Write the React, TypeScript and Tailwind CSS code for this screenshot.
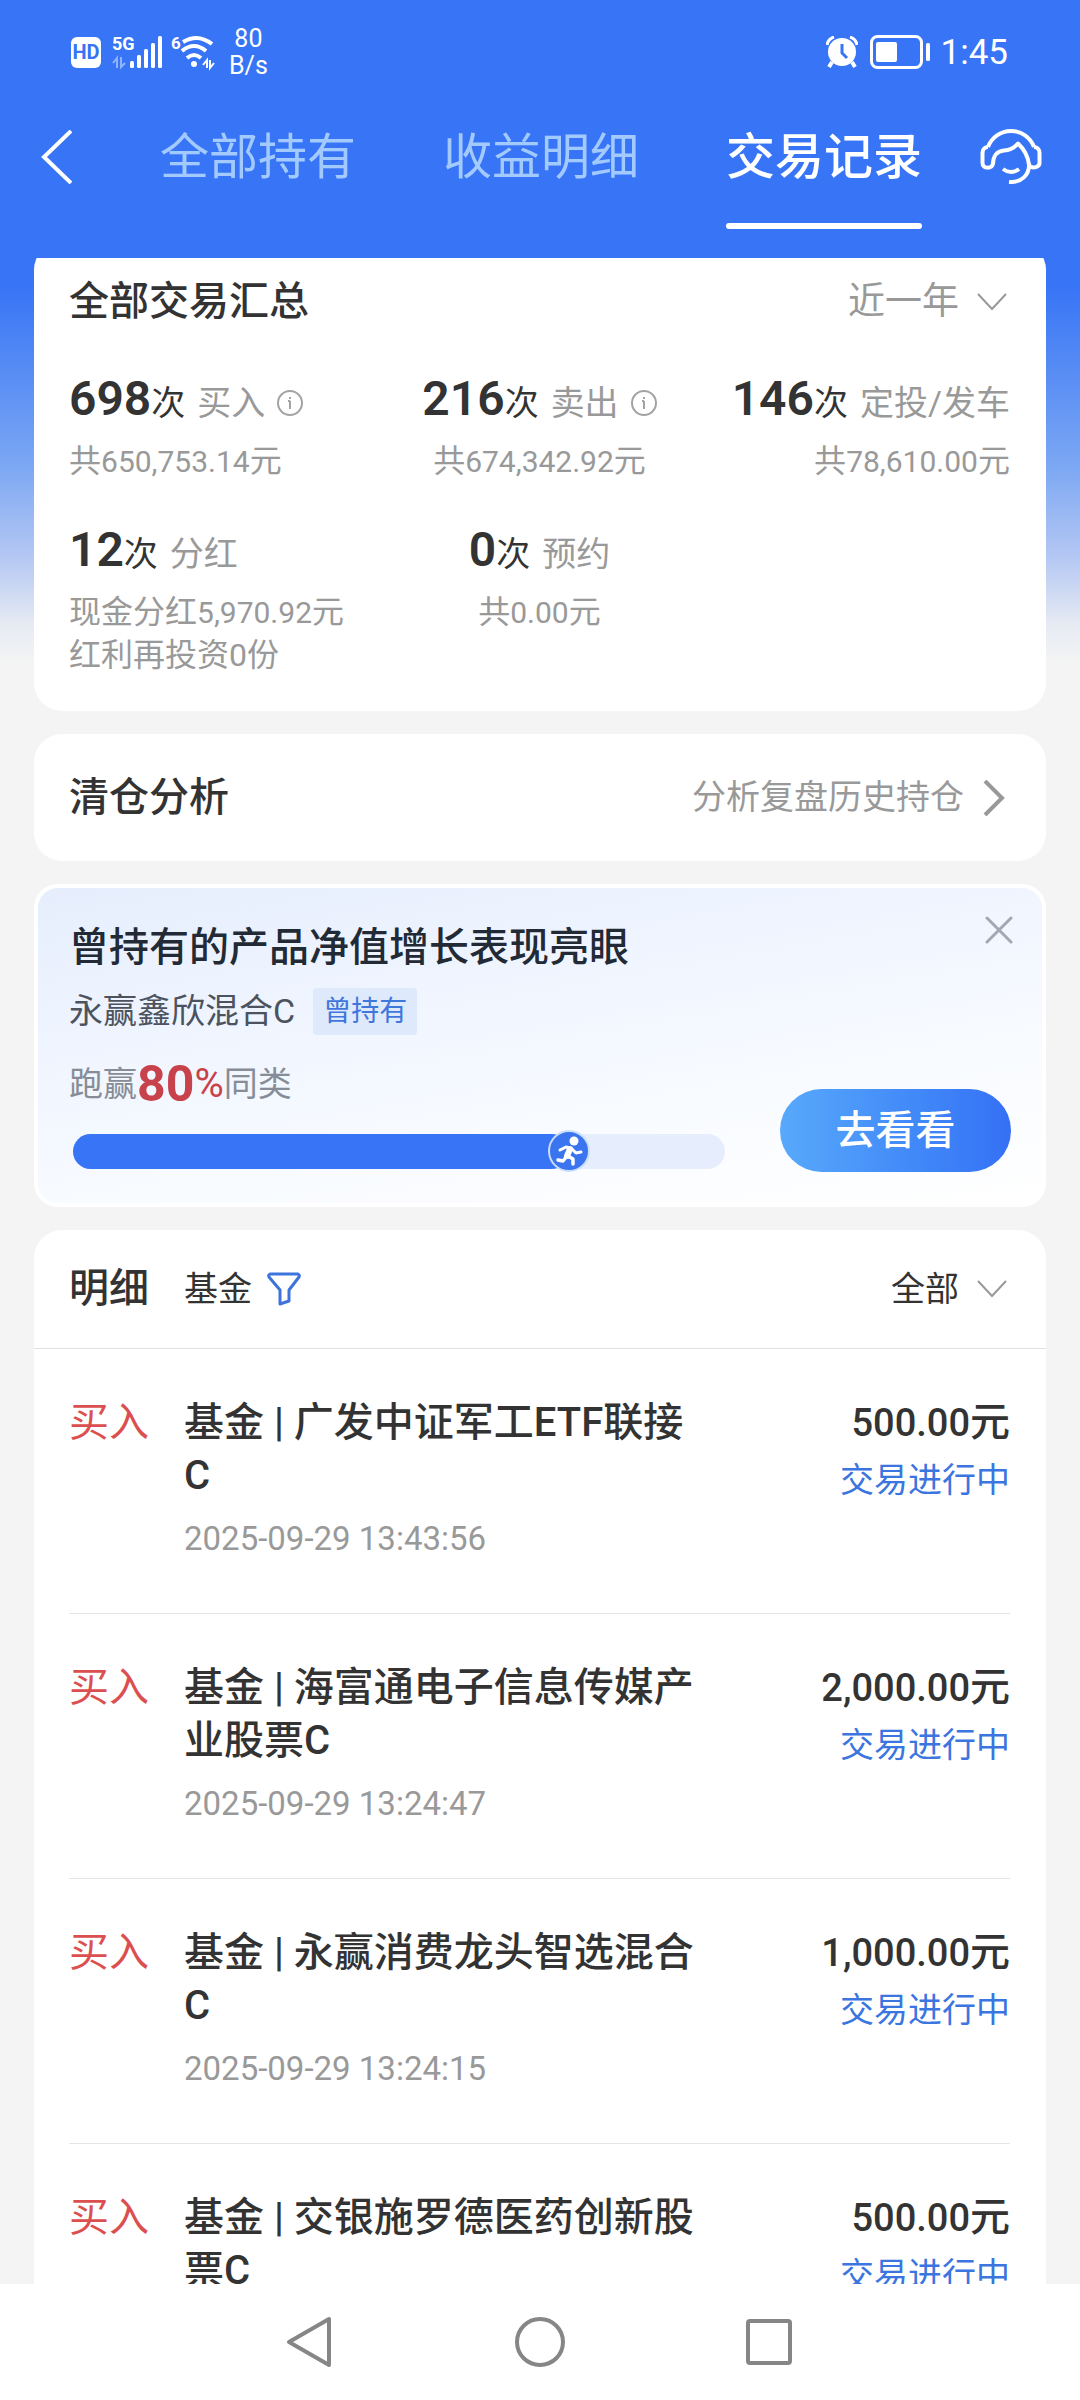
import { useState } from "react";

interface Stat {
  count: string;
  label: string;
  info?: boolean;
  total: string;
  totalLabel?: string;
  extra?: string;
  align: "start" | "center" | "end";
}

interface Trade {
  id: string;
  name: string;
  amount: string;
  time: string;
}

const tabs = ["全部持有", "收益明细", "交易记录"];

const stats: Stat[] = [
  { count: "698", label: "买入", info: true, total: "650,753.14", align: "start" },
  { count: "216", label: "卖出", info: true, total: "674,342.92", align: "center" },
  { count: "146", label: "定投/发车", total: "78,610.00", align: "end" },
  {
    count: "12",
    label: "分红",
    total: "5,970.92",
    totalLabel: "现金分红",
    extra: "红利再投资0份",
    align: "start",
  },
  { count: "0", label: "预约", total: "0.00", align: "center" },
];

const trades: Trade[] = [
  { id: "1", name: "广发中证军工ETF联接C", amount: "500.00", time: "2025-09-29 13:43:56" },
  { id: "2", name: "海富通电子信息传媒产业股票C", amount: "2,000.00", time: "2025-09-29 13:24:47" },
  { id: "3", name: "永赢消费龙头智选混合C", amount: "1,000.00", time: "2025-09-29 13:24:15" },
  { id: "4", name: "交银施罗德医药创新股票C", amount: "500.00", time: "2025-09-29 13:23:40" },
];

const alignClass = {
  start: "items-start",
  center: "items-center",
  end: "items-end",
};

function SignalIcon() {
  return (
    <svg viewBox="0 -6 50 46" className="h-[46px] w-[50px]" fill="#fff" aria-hidden="true">
      <text x="0" y="15" fontSize="18" fontWeight="700">
        5G
      </text>
      <path d="M5 33V23l-4 5M9 22v10l4-4" fill="none" stroke="#fff" strokeWidth="2" opacity=".45" />
      <rect x="18" y="26" width="4" height="7" rx="1.5" />
      <rect x="25" y="20" width="4" height="13" rx="1.5" />
      <rect x="32" y="14" width="4" height="19" rx="1.5" />
      <rect x="39" y="8" width="4" height="25" rx="1.5" />
      <rect x="46" y="1" width="4" height="32" rx="1.5" />
    </svg>
  );
}

function WifiIcon() {
  return (
    <svg viewBox="0 -6 44 46" className="h-[46px] w-[44px]" fill="none" stroke="#fff" aria-hidden="true">
      <text x="0" y="14" fontSize="17" fontWeight="700" fill="#fff" stroke="none">
        6
      </text>
      <path d="M12 7q15-9 29 2" strokeWidth="4" />
      <path d="M11 16q12-10 24 0" strokeWidth="4" />
      <path d="M16 23q7-6 14 0" strokeWidth="4" />
      <circle cx="23" cy="29" r="3" fill="#fff" stroke="none" />
      <path d="M36 33v-8l-4 5M39 25v8l4-5" strokeWidth="2" />
    </svg>
  );
}

function AlarmIcon() {
  return (
    <svg viewBox="0 0 32 32" className="size-8" fill="none" stroke="#fff" aria-hidden="true">
      <circle cx="16" cy="16" r="14" fill="#fff" stroke="none" />
      <path d="M1 9a10 10 0 0 1 7-8M31 9a10 10 0 0 0-7-8" strokeWidth="3" />
      <path d="m6 26-3 5M26 26l3 5" strokeWidth="4" />
      <path d="M16 8v9l5 5" stroke="#3875f6" strokeWidth="3" />
    </svg>
  );
}

function BatteryIcon() {
  return (
    <svg viewBox="0 0 60 34" className="h-[34px] w-[60px]" fill="#fff" aria-hidden="true">
      <rect x="1.5" y="1.5" width="50" height="31" rx="6" fill="none" stroke="#fff" strokeWidth="3" />
      <rect x="6" y="7" width="21" height="20" rx="2" />
      <rect x="56" y="8" width="4" height="18" rx="1.5" />
    </svg>
  );
}

function HeadsetIcon() {
  return (
    <svg
      viewBox="0 0 62 58"
      className="h-[58px] w-[62px]"
      fill="none"
      stroke="#fff"
      strokeWidth="4"
      strokeLinejoin="round"
      aria-hidden="true"
    >
      <path d="M8 20a24.500 24.500 0 0 1 46 0" />
      <path d="M8 20c-4 0-5.500 3-5.500 6v10c0 6 9 6 10.500 1 0-8 4-13 11-13.500 7-.5 11-3.500 14-7 6 5.500 10 11.500 11 21.500" />
      <path d="M54 20c4 0 5.500 3 5.500 6v10c0 4-6 6-10.500 3" />
      <path d="M49 36c1 12-8 20-20 19" />
      <path d="M23 42q8 6 16 0" />
    </svg>
  );
}

function RunnerIcon() {
  return (
    <svg viewBox="0 0 42 42" className="size-[42px]" aria-hidden="true">
      <circle cx="21" cy="21" r="20" fill="#3a75ef" stroke="#c9dffd" strokeWidth="2" />
      <circle cx="26" cy="11" r="4.500" fill="#fff" />
      <g fill="none" stroke="#fff" strokeLinecap="round" strokeLinejoin="round">
        <path d="m12 20 6-3 6 2 4 4 5-1" strokeWidth="3" />
        <path d="m22 19-3 7" strokeWidth="6" />
        <path d="m19 26-4 5-5-1M20 26l5 3v5" strokeWidth="3.500" />
      </g>
    </svg>
  );
}

function ChevronDownIcon() {
  return (
    <svg
      viewBox="0 0 30 18"
      className="pointer-events-none h-[18px] w-[30px]"
      fill="none"
      stroke="#999"
      strokeWidth="2"
      aria-hidden="true"
    >
      <path d="m1 1 14 15L29 1" />
    </svg>
  );
}

function InfoIcon() {
  return (
    <svg viewBox="0 0 26 26" className="size-[26px]" fill="none" stroke="#a3a3a3" strokeWidth="2" aria-hidden="true">
      <circle cx="13" cy="13" r="12" />
      <path d="M13 11v8M13 7v2M11 11h2" />
    </svg>
  );
}

function StatusBar() {
  return (
    <div className="flex h-[104px] items-center justify-between pr-[72px] pl-[71px] text-white">
      <div className="flex items-center">
        <span className="flex h-[31px] w-[30px] items-center justify-center rounded-md bg-white text-[20px] leading-none font-bold text-[#3875f6]">
          HD
        </span>
        <span className="ml-[11px]">
          <SignalIcon />
        </span>
        <span className="ml-[9px]">
          <WifiIcon />
        </span>
        <span className="ml-[14px] text-center text-[25px] leading-[27px]">
          80
          <br />
          B/s
        </span>
      </div>
      <div className="flex items-center">
        <AlarmIcon />
        <span className="ml-3">
          <BatteryIcon />
        </span>
        <span className="ml-[11px] text-[35px] leading-none">1:45</span>
      </div>
    </div>
  );
}

function Header() {
  const [active, setActive] = useState("交易记录");

  return (
    <header className="shrink-0 bg-[#3875f6]">
      <StatusBar />
      <div className="flex h-[154px] items-start justify-between pr-[38px] pl-10">
        <button type="button" aria-label="返回" className="mt-[26px]">
          <svg viewBox="0 0 32 54" className="h-[54px] w-8" fill="none" stroke="#fff" strokeWidth="4" aria-hidden="true">
            <path d="M31 1 4 27l27 26" />
          </svg>
        </button>
        <div role="tablist" className="ml-[30px] flex gap-[87px] pt-[21px] text-[49px] leading-[66px]">
          {tabs.map((tab) => (
            <button
              key={tab}
              type="button"
              role="tab"
              aria-selected={tab === active}
              onClick={() => setActive(tab)}
              className={
                tab === active
                  ? "font-medium text-white after:mt-8 after:block after:h-[6px] after:rounded-full after:bg-white"
                  : "text-[#a3caff] after:mt-8 after:block after:h-[6px]"
              }
            >
              {tab}
            </button>
          ))}
        </div>
        <button type="button" aria-label="客服" className="mt-[23px]">
          <HeadsetIcon />
        </button>
      </div>
    </header>
  );
}

function StatItem({ stat }: { stat: Stat }) {
  return (
    <div className={`flex flex-col whitespace-nowrap ${alignClass[stat.align]}`}>
      <div className="flex items-baseline text-[34px] leading-[60px]">
        <span className="text-[48px] font-semibold text-[#333]">{stat.count}</span>
        <span className="text-[#333]">次</span>
        <span className="ml-3 text-[#999]">{stat.label}</span>
        {stat.info && (
          <button type="button" aria-label={`${stat.label}说明`} className="ml-3 self-center pt-1">
            <InfoIcon />
          </button>
        )}
      </div>
      <p className="mt-[7px] text-[32px] leading-[43px] text-[#999]">
        {stat.totalLabel ?? "共"}
        <span className="text-[30px]">{stat.total}</span>元
      </p>
      {stat.extra && <p className="text-[32px] leading-[43px] text-[#999]">{stat.extra}</p>}
    </div>
  );
}

function Summary() {
  return (
    <section className="-mt-4 rounded-[28px] bg-white pt-[33px] pr-9 pb-[34px] pl-[35px]">
      <div className="flex items-center justify-between">
        <h2 className="text-[40px] leading-[54px] font-medium text-[#333]">全部交易汇总</h2>
        <label className="flex items-center gap-[18px] pr-[3px]">
          <select aria-label="时间范围" className="appearance-none text-[37px] leading-[54px] text-[#999]">
            <option>近一年</option>
          </select>
          <ChevronDownIcon />
        </label>
      </div>
      <div className="mt-10 grid grid-cols-3 gap-y-[37px]">
        {stats.map((stat) => (
          <StatItem key={stat.label} stat={stat} />
        ))}
      </div>
    </section>
  );
}

function Analysis() {
  return (
    <section className="flex items-center justify-between rounded-[28px] bg-white py-9 pr-9 pl-[35px]">
      <h2 className="text-[40px] leading-[55px] font-medium text-[#333]">清仓分析</h2>
      <a href="#analysis" className="flex items-center gap-[18px] pr-1 text-[34px] leading-[55px] text-[#999]">
        分析复盘历史持仓
        <svg viewBox="0 0 24 36" className="h-9 w-6" fill="none" stroke="#999" strokeWidth="4" aria-hidden="true">
          <path d="m3 1 17 17L3 35" />
        </svg>
      </a>
    </section>
  );
}

function Highlight() {
  const fill = 76;

  return (
    <section className="relative rounded-[24px] border-4 border-white bg-[linear-gradient(170deg,#e6eefd_0%,#f1f6ff_40%,#fafcff_75%,#ffffff_100%)] pt-[33px] pr-[31px] pb-[31px] pl-[31px]">
      <button type="button" aria-label="关闭" className="absolute top-[28px] right-[29px]">
        <svg viewBox="0 0 28 28" className="size-7" fill="none" stroke="#a1a8b3" strokeWidth="3" strokeLinecap="round" aria-hidden="true">
          <path d="m2 2 24 24M26 2 2 26" />
        </svg>
      </button>
      <h2 className="text-[40px] leading-[54px] font-medium text-[#222a35]">曾持有的产品净值增长表现亮眼</h2>
      <div className="mt-3 flex items-center gap-[18px]">
        <span className="text-[34px] leading-[48px] text-[#4c535e]">永赢鑫欣混合C</span>
        <span className="rounded-[4px] bg-[#dfe9fc] px-[10px] text-[28px] leading-[47px] text-[#3f77dc]">曾持有</span>
      </div>
      <div className="mt-[19px] flex items-end justify-between">
        <div className="w-[656px] pb-[3px]">
          <p className="flex items-center text-[34px] leading-[60px] text-[#868d97]">
            跑赢
            <span className="text-[50px] font-bold text-[#c8424b]">80</span>
            <span className="text-[40px] text-[#c8424b]">%</span>
            同类
          </p>
          <div
            role="progressbar"
            aria-label="跑赢同类"
            aria-valuenow={80}
            className="relative mt-5 ml-1 h-[35px] rounded-full bg-[#e6edfd]"
          >
            <div className="h-full rounded-full bg-[#3875f6]" style={{ width: `${fill}%` }} />
            <span className="absolute -top-1 -ml-[21px]" style={{ left: `${fill}%` }}>
              <RunnerIcon />
            </span>
          </div>
        </div>
        <button
          type="button"
          className="h-[83px] w-[231px] rounded-full bg-linear-to-r from-[#58a9fb] to-[#3570f5] text-[40px] font-medium text-white"
        >
          去看看
        </button>
      </div>
    </section>
  );
}

function TradeRow({ trade }: { trade: Trade }) {
  return (
    <li className="mr-9 ml-[35px] flex border-b border-[#e5e5e5] pt-[47px] pb-[54px] text-[40px] leading-[53px]">
      <span className="w-[115px] shrink-0 text-[#dc4f50]">买入</span>
      <div className="w-[520px]">
        <p className="font-medium break-all text-[#333]">{`基金 | ${trade.name}`}</p>
        <time className="mt-4 block text-[33px] leading-[41px] text-[#999]">{trade.time}</time>
      </div>
      <div className="ml-auto text-right">
        <p className="font-medium text-[#333]">
          <span className="text-[38px]">{trade.amount}</span>元
        </p>
        <p className="mt-1 text-[34px] leading-[53px] text-[#3b75df]">交易进行中</p>
      </div>
    </li>
  );
}

function TradeList() {
  return (
    <section className="rounded-t-[28px] bg-white">
      <div className="flex items-center border-b border-[#dfdfdf] py-8 pr-9 pl-[35px] text-[34px] leading-[54px] text-[#333]">
        <h2 className="w-[115px] text-[40px] font-medium">明细</h2>
        <button type="button" className="flex items-center gap-[15px]">
          基金
          <svg
            viewBox="0 0 34 34"
            className="size-[34px]"
            fill="none"
            stroke="#3d74dc"
            strokeWidth="3"
            strokeLinejoin="round"
            aria-hidden="true"
          >
            <path d="M3 2h28q2 1 1 3L22 18v11l-9 3V18L2 5q-1-2 1-3Z" />
          </svg>
        </button>
        <label className="ml-auto flex items-center gap-[18px] pr-[3px]">
          <select aria-label="交易类型" className="appearance-none leading-[54px]">
            <option>全部</option>
          </select>
          <ChevronDownIcon />
        </label>
      </div>
      <ul>
        {trades.map((trade) => (
          <TradeRow key={trade.id} trade={trade} />
        ))}
      </ul>
    </section>
  );
}

function SystemNav() {
  const iconProps = {
    viewBox: "0 0 52 52",
    className: "size-[52px]",
    fill: "none",
    stroke: "#868686",
    strokeWidth: 4,
    strokeLinejoin: "round" as const,
    "aria-hidden": true,
  };

  return (
    <nav className="flex h-[116px] shrink-0 items-center justify-center gap-[177px] bg-white">
      <button type="button" aria-label="后退">
        <svg {...iconProps}>
          <path d="M44 3v46L4 26Z" />
        </svg>
      </button>
      <button type="button" aria-label="主屏幕">
        <svg {...iconProps}>
          <circle cx="26" cy="26" r="23" />
        </svg>
      </button>
      <button type="button" aria-label="最近任务">
        <svg {...iconProps}>
          <rect x="5" y="5" width="42" height="42" rx="2" />
        </svg>
      </button>
    </nav>
  );
}

export default function App() {
  return (
    <div className="flex h-screen flex-col bg-[#f4f4f4] font-[Roboto,'Noto_Sans_CJK_SC',sans-serif]">
      <Header />
      <main className="min-h-0 flex-1 overflow-hidden bg-[linear-gradient(180deg,#3875f6_0px,#3875f6_30px,#7aa6f3_205px,#b5c8f3_300px,#e5eaf3_365px,#f4f4f4_405px)] px-[34px]">
        <div className="flex flex-col gap-[23px]">
          <Summary />
          <Analysis />
          <Highlight />
          <TradeList />
        </div>
      </main>
      <SystemNav />
    </div>
  );
}
